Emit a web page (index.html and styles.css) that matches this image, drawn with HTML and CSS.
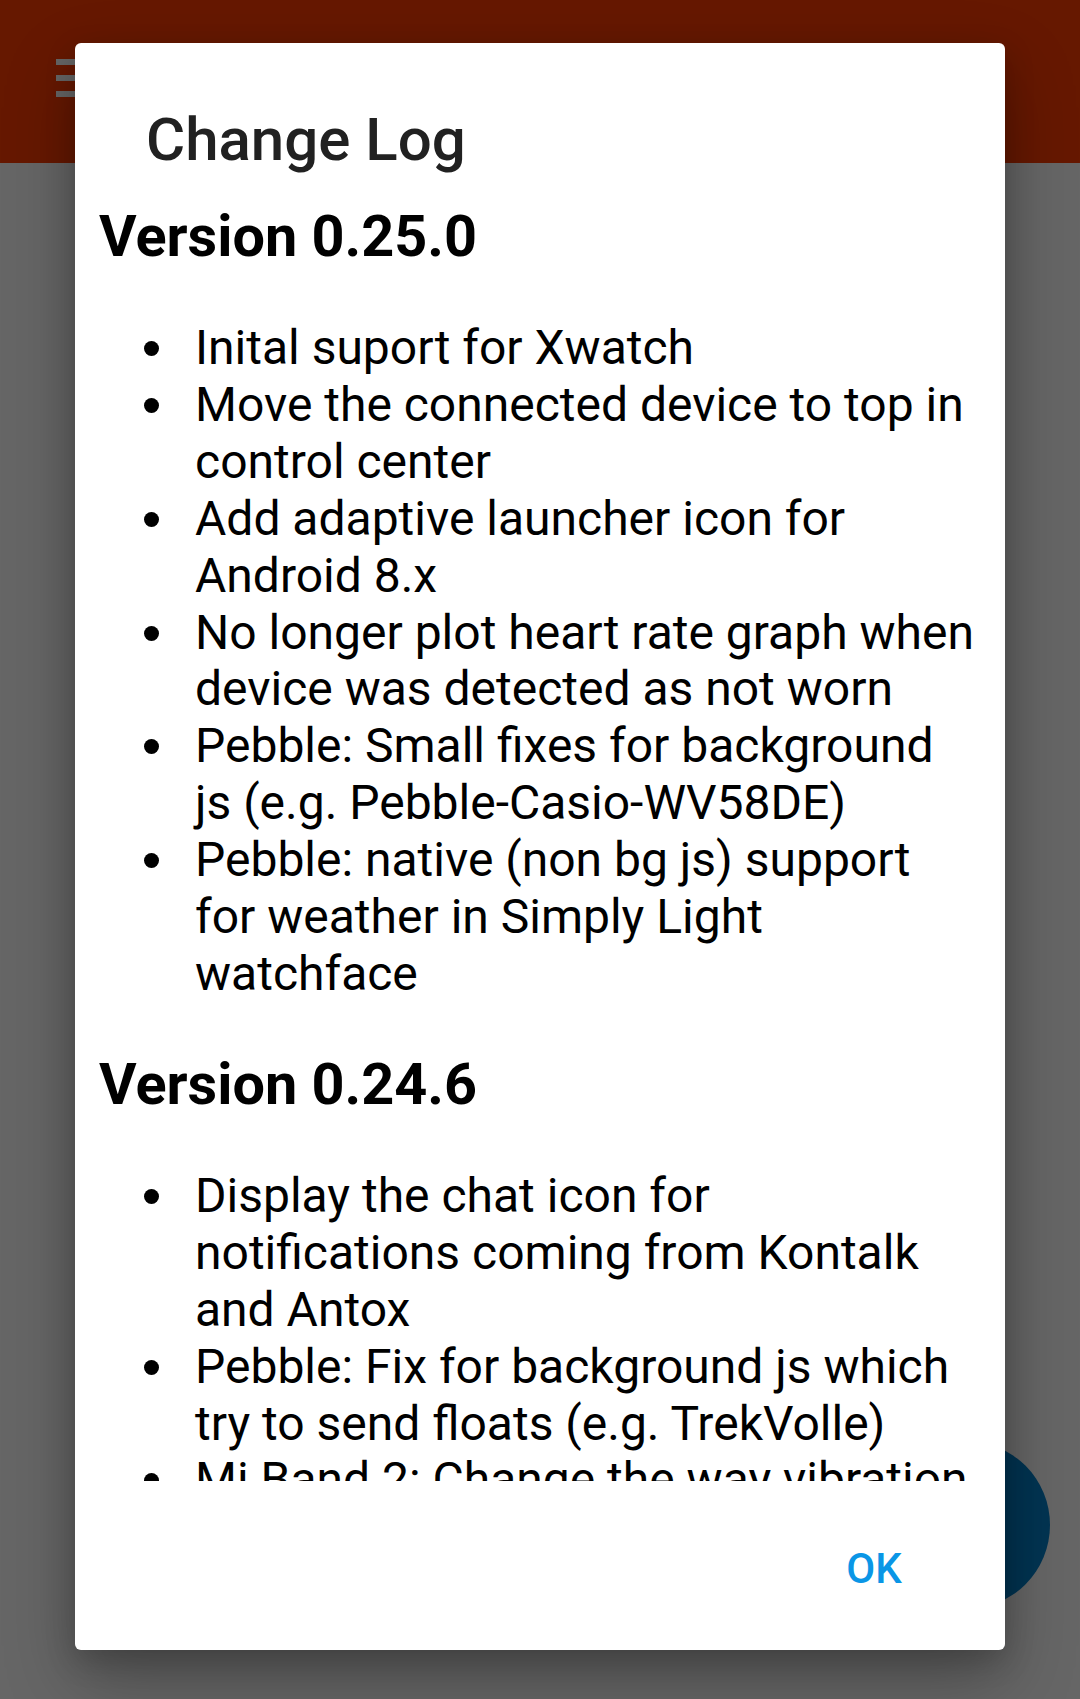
FILE: index.html
```html
<!DOCTYPE html>
<html lang="en">
<head>
<meta charset="utf-8">
<title>Change Log</title>
<link rel="stylesheet" href="styles.css">
</head>
<body>
<div class="app">
  <header class="toolbar">
    <button class="menu" aria-label="Menu">
      <span class="bar"></span>
      <span class="bar"></span>
      <span class="bar"></span>
    </button>
  </header>
  <main class="main"></main>
  <div class="fab"></div>
  <div class="scrim"></div>
  <section class="dialog" role="dialog">
    <h1 class="dialog-title">Change Log</h1>
    <div class="dialog-content">
      <h2 class="version">Version 0.25.0</h2>
      <ul class="changes">
        <li>Inital suport for Xwatch</li>
        <li>Move the connected device to top in control center</li>
        <li>Add adaptive launcher icon for Android 8.x</li>
        <li>No longer plot heart rate graph when device was detected as not worn</li>
        <li>Pebble: Small fixes for background js (e.g. Pebble-Casio-WV58DE)</li>
        <li>Pebble: native (non bg js) support for weather in Simply Light watchface</li>
      </ul>
      <h2 class="version">Version 0.24.6</h2>
      <ul class="changes">
        <li>Display the chat icon for notifications coming from Kontalk and Antox</li>
        <li>Pebble: Fix for background js which try to send floats (e.g. TrekVolle)</li>
        <li>Mi Band 2: Change the way vibration patterns are set</li>
        <li>Fix crash in notification handling</li>
      </ul>
    </div>
    <div class="dialog-actions">
      <button class="ok">OK</button>
    </div>
  </section>
</div>
</body>
</html>
```

FILE: styles.css
```css
html, body {
  margin: 0;
  padding: 0;
}

body {
  width: 1080px;
  height: 1699px;
  overflow: hidden;
  font-family: Roboto, "Liberation Sans", sans-serif;
  background: #ffffff;
}

.app {
  position: relative;
  width: 1080px;
  height: 1699px;
  display: flex;
  flex-direction: column;
}

.toolbar {
  height: 163px;
  flex: 0 0 163px;
  background: #ff3c00;
  display: flex;
  align-items: flex-start;
  padding: 59px 0 0 56px;
  box-sizing: border-box;
}

.menu {
  border: 0;
  padding: 0;
  background: transparent;
  display: flex;
  flex-direction: column;
  gap: 10px;
  width: 54px;
}

.bar {
  display: block;
  width: 54px;
  height: 6px;
  background: #ffffff;
}

.main {
  flex: 1;
  background: #ffffff;
}

.fab {
  position: absolute;
  left: 882px;
  top: 1441px;
  width: 168px;
  height: 168px;
  border-radius: 50%;
  background: #0582cc;
}

.scrim {
  position: absolute;
  inset: 0;
  background: rgba(0, 0, 0, 0.6);
}

.dialog {
  position: absolute;
  left: 75px;
  top: 43px;
  width: 930px;
  height: 1607px;
  background: #ffffff;
  border-radius: 6px;
  display: flex;
  flex-direction: column;
  box-shadow: 0 30px 70px rgba(0, 0, 0, 0.28), 0 10px 30px rgba(0, 0, 0, 0.18);
}

.dialog-title {
  margin: 0;
  padding: 62px 72px 0 71px;
  font-size: 60px;
  line-height: 70px;
  font-weight: 500;
  color: #212121;
}

.dialog-content {
  flex: 0 0 1306px;
  height: 1306px;
  overflow: hidden;
  padding: 0 28px 0 24px;
  color: #000000;
  display: flow-root;
}

.version {
  margin: 48px 0 48px;
  font-size: 57.6px;
  line-height: 67px;
  font-weight: 700;
}

.version:first-child {
  margin-top: 28px;
}

.changes {
  margin: 50px 0 48px;
  padding: 0;
  list-style: none;
  font-size: 48px;
  line-height: 56.9px;
}

.changes li {
  display: grid;
  grid-template-columns: 96px 1fr;
}

.changes li::before {
  content: "";
  width: 15px;
  height: 15px;
  border-radius: 50%;
  background: #000000;
  margin: 21px 0 0 45px;
}

.dialog-actions {
  flex: 1;
  display: flex;
  justify-content: flex-end;
  align-items: flex-start;
  padding: 64px 35px 0 0;
}

.ok {
  border: 0;
  background: transparent;
  padding: 0;
  min-width: 192px;
  text-align: center;
  font-family: Roboto, "Liberation Sans", sans-serif;
  font-size: 42px;
  line-height: 48px;
  font-weight: 500;
  color: #0a96e6;
  text-transform: uppercase;
}
```
